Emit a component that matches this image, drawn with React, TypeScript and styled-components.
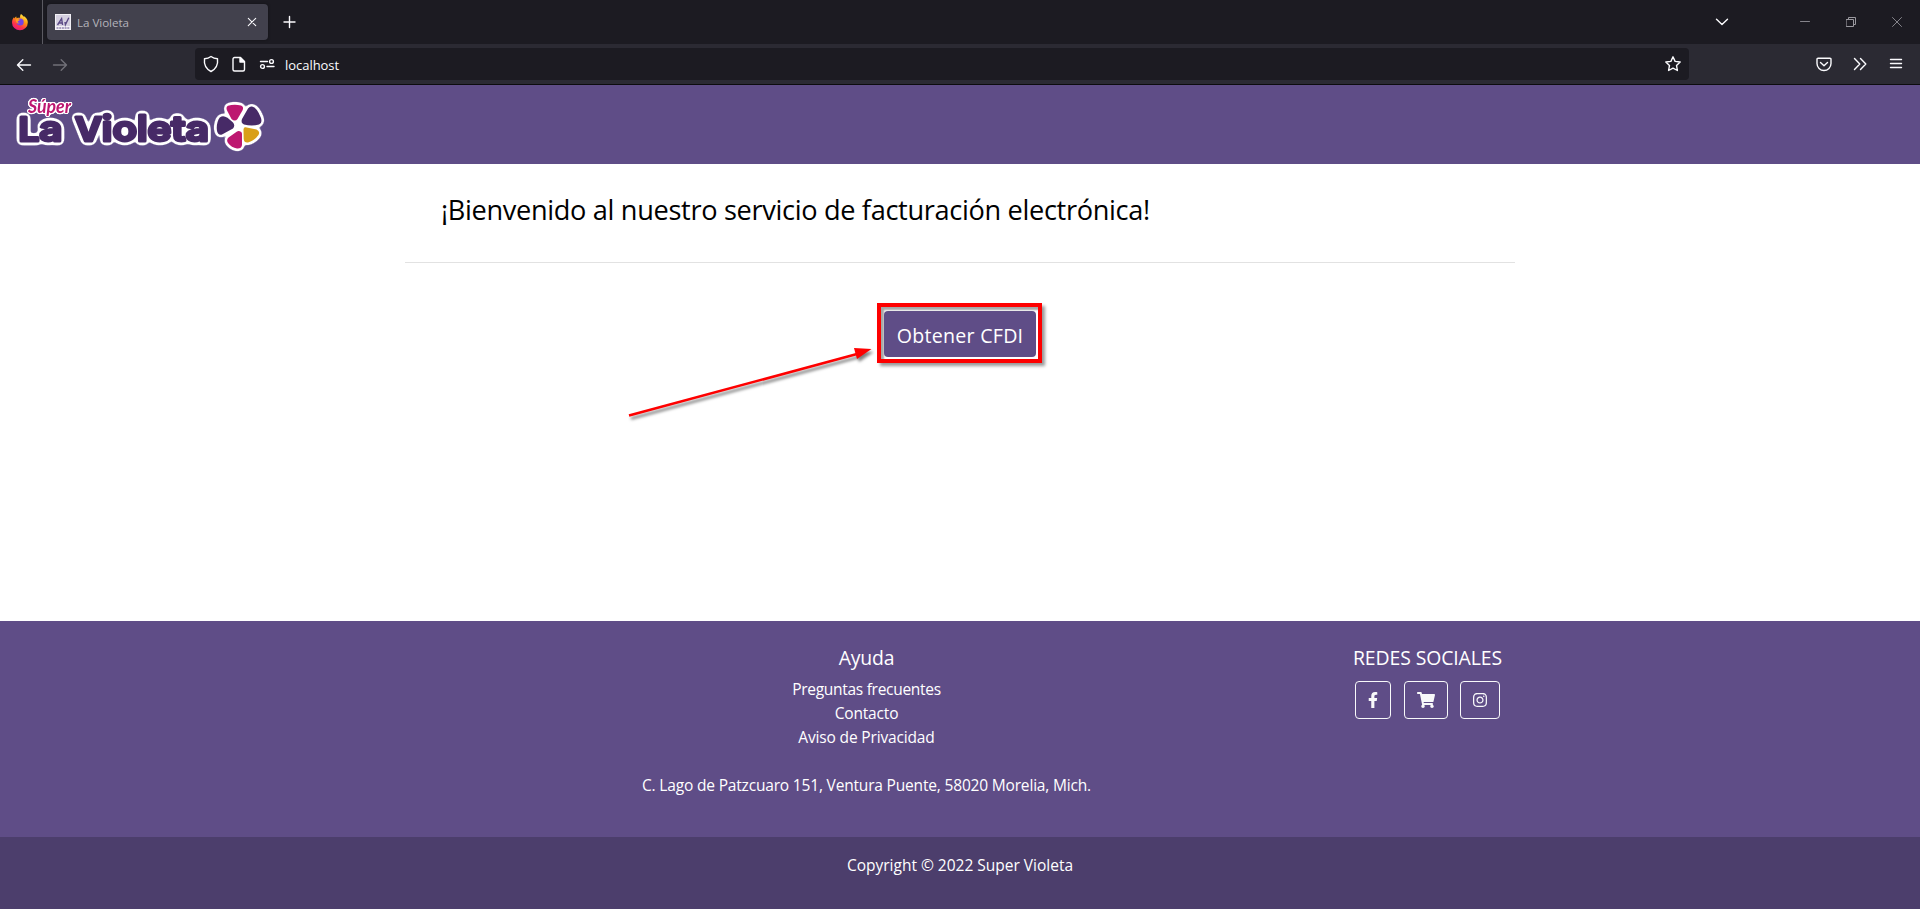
import React from 'react';
import styled, { createGlobalStyle } from 'styled-components';
import { FaFacebookF, FaShoppingCart, FaInstagram } from 'react-icons/fa';

const GlobalStyle = createGlobalStyle`
  * { box-sizing: border-box; }
  body { margin: 0; background: #fff; font-family: "Open Sans", "Noto Sans", sans-serif; }
  h2, h5, p { margin: 0; font-weight: 400; }
  a { color: inherit; text-decoration: none; }
`;

const Page = styled.div`
  width: 1920px;
  height: 910px;
  overflow: hidden;
  display: flex;
  flex-direction: column;
`;

/* Browser chrome */
const TabStrip = styled.div`
  height: 44px;
  flex: none;
  display: flex;
  align-items: center;
  background: #1c1b22;
  color: #fbfbfe;
`;
const FirefoxView = styled.div`
  width: 43px;
  height: 44px;
  padding: 13px 0 0 11px;
  border-right: 1px solid #5b5a62;
`;
const Tab = styled.div`
  width: 221px;
  height: 36px;
  margin-left: 4px;
  padding: 0 11px 0 8px;
  border-radius: 4px;
  background: #42414d;
  display: flex;
  align-items: center;
  box-shadow: 0 0 3px rgba(0, 0, 0, 0.4);
`;
const TabTitle = styled.span`
  flex: 1;
  margin: 0 0 0 6px;
  font-size: 11.64px;
  letter-spacing: -0.05px;
  color: #b4b3bb;
`;
const NewTab = styled.div`
  display: flex;
  margin-left: 15px;
`;
const WindowControls = styled.div`
  margin-left: auto;
  padding-right: 18px;
  display: flex;
  align-items: center;
`;
const Toolbar = styled.div`
  height: 41px;
  flex: none;
  display: flex;
  align-items: center;
  background: #2b2a33;
  border-bottom: 1px solid #0c0c0d;
  color: #fbfbfe;
`;
const NavButtons = styled.div`
  width: 195px;
  padding: 1px 0 0 16px;
  display: flex;
  gap: 20px;
`;
const AddressBar = styled.div`
  width: 1494px;
  height: 32px;
  padding: 0 7px 0 7px;
  border-radius: 4px;
  background: #1c1b22;
  display: flex;
  align-items: center;
`;
const SiteIcons = styled.div`
  display: flex;
  gap: 10px;
`;
const Address = styled.span`
  flex: 1;
  margin: 2px 0 0 9px;
  font-size: 13px;
  letter-spacing: -0.04px;
`;
const ToolbarActions = styled.div`
  margin-left: auto;
  padding-right: 15px;
  display: flex;
  gap: 18px;
`;
const Glyph = styled.svg<{ $gap?: number; $tone?: string; $weight?: number }>`
  display: block;
  flex: none;
  margin-right: ${(p) => p.$gap ?? 0}px;
  color: ${(p) => p.$tone ?? '#fbfbfe'};
  fill: none;
  stroke: currentColor;
  stroke-width: ${(p) => p.$weight ?? 1.4};
  stroke-linecap: round;
  stroke-linejoin: round;
`;

/* Site */
const Header = styled.header`
  height: 79px;
  flex: none;
  padding: 8px 0 0 10px;
  background: #5f4d87;
`;
const Main = styled.main`
  width: 1110px;
  height: 457px;
  flex: none;
  margin: 0 auto;
  display: flex;
  flex-direction: column;
  align-items: center;
`;
const Heading = styled.div`
  width: 1110px;
  height: 99px;
  padding: 26px 36px 0;
  border-bottom: 1px solid #e2e2e2;
`;
const Title = styled.h2`
  font-size: 27.16px;
  line-height: 40px;
  letter-spacing: -0.329px;
  color: #000;
  white-space: nowrap;
`;
const Highlight = styled.div`
  position: relative;
  margin: 40px 1px 0 0;
  width: 165px;
  height: 60px;
  padding: 4px 2px 2px 3px;
  border: 4px solid #fe0000;
  box-shadow: 3px 3px 3px rgba(0, 0, 0, 0.4), inset 3px 3px 2px rgba(0, 0, 0, 0.35);
`;
const PrimaryButton = styled.button`
  display: block;
  width: 152px;
  height: 46px;
  padding: 2px 0 0;
  border: 0;
  border-radius: 4px;
  background: #5f4d87;
  color: #fff;
  font-family: inherit;
  font-size: 19.6px;
  letter-spacing: 0.27px;
`;
const Arrow = styled.svg`
  position: absolute;
  left: -256px;
  top: 36px;
  overflow: visible;
  filter: drop-shadow(2px 3px 1.5px rgba(0, 0, 0, 0.5));
`;
const Footer = styled.footer`
  height: 216px;
  flex: none;
  padding-top: 25px;
  display: grid;
  grid-template-columns: 585px 563px 559px;
  background: #5f4d87;
  color: #fff;
`;
const FooterColumn = styled.section`
  display: flex;
  flex-direction: column;
  align-items: center;
`;
const FooterTitle = styled.h5<{ $track: number }>`
  font-size: 19.4px;
  line-height: 24px;
  letter-spacing: ${(p) => p.$track}px;
  margin-bottom: 7px;
`;
const FooterLine = styled.p<{ $track: number }>`
  font-size: 15.52px;
  line-height: 24px;
  letter-spacing: ${(p) => p.$track}px;
  white-space: nowrap;
`;
const AddressLine = styled(FooterLine)`
  margin-top: 24px;
`;
const SocialRow = styled.div`
  margin-top: 4px;
  display: flex;
`;
const SocialButton = styled.a<{ $width: number; $gap?: number }>`
  width: ${(p) => p.$width}px;
  height: 38px;
  margin-right: ${(p) => p.$gap ?? 0}px;
  border: 1px solid #f8f9fa;
  border-radius: 4px;
  display: flex;
  align-items: center;
  justify-content: center;
  color: #f8f9fa;
  font-size: 16px;
`;
const Copyright = styled.div`
  height: 72px;
  flex: none;
  padding-top: 16px;
  display: flex;
  justify-content: center;
  background: #4c3e6c;
  color: #fff;
`;

const FirefoxLogo = () => (
  <svg width="18" height="18" viewBox="0 0 18 18">
    <defs>
      <linearGradient id="fx" x1="0.8" y1="0" x2="0.25" y2="1">
        <stop offset="0" stopColor="#fff44f" />
        <stop offset="0.4" stopColor="#ff980e" />
        <stop offset="0.7" stopColor="#ff3647" />
        <stop offset="1" stopColor="#e31587" />
      </linearGradient>
    </defs>
    <path fill="url(#fx)" d="M10 1c1.200.7 2 1.500 2.500 2.500 1-.2 1.700.4 2 .9 1.500 1.300 2.300 3 2.300 5A7.900 7.900 0 0 1 1 9.400C1 7.200 1.800 5.500 3 4.200l.5 1.300C4 4.500 4.500 4 5.300 3.600l.3 1.700C7 4.600 8.600 5 9.200 4.800 8.800 3.300 9.300 1.800 10 1z" />
    <circle cx="9.200" cy="8.900" r="3.500" fill="#7542e5" />
    <path fill="#ff9a1f" d="M4.800 6.300c1.600-.8 3.200-.2 4.200.5-.4.900-1.700 1-2.200 1.700-.4.900.8 1.600 2 1.300-1.300 1.600-4.300.4-4-3.500z" />
  </svg>
);

const Favicon = () => (
  <svg width="16" height="16" viewBox="0 0 16 16">
    <path fill="#f3f1f6" d="M0 0h16v16H0z" />
    <path fill="#d5d0e0" d="M1 1h14v11H1z" />
    <path fill="none" stroke="#5b4a86" strokeWidth="1.400" d="M2.500 11 6.600 4.600 7.600 11M4.300 9h3M10 8 10.400 10.700 13.800 3.800" />
    <path stroke="#62518c" strokeWidth="1.200" strokeDasharray="2 .7" d="M1.500 14h13" />
  </svg>
);

const Petals = () => (
  <g>
    <path d="M228 105.800Q234 103.800 241 105.500Q244 106.500 242.700 110L237.500 119Q235 122 231.500 119L226.800 110Q225.800 107 228 105.800Z" fill="#bd1770" />
    <path d="M252 106.500Q257 107.500 261 118Q262.500 123.500 259 124.500Q252 126.500 244 124.500Q240.500 123 242 119L248 108.500Q250 106 252 106.500Z" fill="#472a67" />
    <path d="M221.500 116.500Q224 115.500 227.500 117.800L233 122.500Q235.500 125.500 233 128.500L222 134.500Q218 135.500 217 131Q216 125 218.500 119.500Q219.500 117 221.500 116.500Z" fill="#472a67" />
    <path d="M245.500 127.300L256.500 129.500Q260.500 131.500 258.500 135Q254.500 140.500 248 142.500Q244 143 243.700 139L243.500 129.500Q243.700 127 245.500 127.300Z" fill="#d99f19" />
    <path d="M239 131Q242 131.500 242 134L242 145Q241.500 148.800 237 148.500Q231.500 147.500 228 143Q226 140 228.500 137.500L237 131.500Q238 130.800 239 131Z" fill="#bd1770" />
  </g>
);

const Logo = () => (
  <svg width="262" height="68" viewBox="10 93 262 68" role="img" aria-label="Súper La Violeta">
    <defs>
      {/* Soft-cornered white rim around whatever it is applied to */}
      <filter id="rim" filterUnits="userSpaceOnUse" x="10" y="90" width="262" height="70" colorInterpolationFilters="sRGB">
        <feGaussianBlur in="SourceAlpha" stdDeviation="2.200" result="soft" />
        <feColorMatrix in="soft" values="0 0 0 0 1  0 0 0 0 1  0 0 0 0 1  0 0 0 12 -0.6" result="edge" />
        <feMerge><feMergeNode in="edge" /><feMergeNode in="SourceGraphic" /></feMerge>
      </filter>
      <filter id="thinRim" filterUnits="userSpaceOnUse" x="10" y="90" width="90" height="40" colorInterpolationFilters="sRGB">
        <feGaussianBlur in="SourceAlpha" stdDeviation="1.300" result="soft" />
        <feColorMatrix in="soft" values="0 0 0 0 1  0 0 0 0 1  0 0 0 0 1  0 0 0 12 -0.6" result="edge" />
        <feMerge><feMergeNode in="edge" /><feMergeNode in="SourceGraphic" /></feMerge>
      </filter>
    </defs>
    <g filter="url(#rim)">
      <path d="M231 118l12-3 3 14-5 6-10-4z" fill="#fff" />
      <Petals />
      <g fontFamily="Inter, sans-serif" fontWeight="600" fill="#472a67" stroke="#472a67" strokeWidth="3" strokeLinejoin="round">
        <text x="18.500" y="140.500" fontSize="32" textLength="44" lengthAdjust="spacingAndGlyphs">L<tspan fontSize="35">a</tspan></text>
        <text x="75" y="140.500" fontSize="32" textLength="134" lengthAdjust="spacingAndGlyphs">V<tspan fontSize="35">ioleta</tspan></text>
      </g>
    </g>
    <text x="28" y="113" textLength="43" lengthAdjust="spacingAndGlyphs" fontFamily="Lato, sans-serif" fontStyle="italic" fontWeight="700" fontSize="18" fill="#bd1770" filter="url(#thinRim)">Súper</text>
  </svg>
);

export default function App() {
  return (
    <Page>
      <GlobalStyle />
      <TabStrip>
        <FirefoxView><FirefoxLogo /></FirefoxView>
        <Tab>
          <Favicon />
          <TabTitle>La Violeta</TabTitle>
          <Glyph width="10" height="10" viewBox="0 0 10 10" $weight={1.1}><path d="M1.300 1.300l7.400 7.400M8.700 1.300 1.300 8.700" /></Glyph>
        </Tab>
        <NewTab><Glyph width="14" height="14" viewBox="0 0 14 14"><path d="M6.500 1.500v11M1 7h11" /></Glyph></NewTab>
        <WindowControls>
          <Glyph width="14" height="10" viewBox="0 0 14 10" $gap={71}><path d="M1.500 2.300 7 7.600l5.500-5.300" /></Glyph>
          <Glyph width="10" height="10" viewBox="0 0 10 10" $gap={36} $tone="#85848b" $weight={1}><path d="M.5 4.500h9" /></Glyph>
          <Glyph width="10" height="10" viewBox="0 0 10 10" $gap={36} $tone="#9a999f" $weight={1}><path strokeLinejoin="miter" d="M.5 2.500h7v7h-7zM2.500 2.500v-2h7v7h-2" /></Glyph>
          <Glyph width="10" height="10" viewBox="0 0 10 10" $tone="#85848b" $weight={1}><path d="M.5.5l9 9M9.500.5l-9 9" /></Glyph>
        </WindowControls>
      </TabStrip>
      <Toolbar>
        <NavButtons>
          <Glyph width="16" height="16" viewBox="0 0 16 16"><path d="M14.500 8H1.800M6.800 2.800 1.500 8l5.300 5.200" /></Glyph>
          <Glyph width="16" height="16" viewBox="0 0 16 16" $tone="#717078"><path d="M1.500 8h12.700M9.200 2.800 14.500 8l-5.300 5.200" /></Glyph>
        </NavButtons>
        <AddressBar>
          <SiteIcons>
            <Glyph width="18" height="18" viewBox="0 0 18 18"><path d="M9 1.500c2 1.500 4 2.100 6.500 2.200C16.200 9.500 14 14 9 16.500 4 14 1.800 9.500 2.500 3.700 5 3.600 7 3 9 1.500z" /></Glyph>
            <Glyph width="18" height="18" viewBox="0 0 18 18"><path d="M4.500 2.500h6l4 4v8a1.500 1.500 0 0 1-1.500 1.500H4.500A1.500 1.500 0 0 1 3 14.500V4a1.500 1.500 0 0 1 1.500-1.500z" /><path d="M10 2.800v4.200h4.200z" fill="currentColor" /></Glyph>
            <Glyph width="18" height="18" viewBox="0 0 18 18"><path d="M2.500 6.500h7M9 11.500h7" /><circle cx="13.500" cy="6.500" r="1.900" /><circle cx="4.500" cy="11.500" r="1.900" /></Glyph>
          </SiteIcons>
          <Address>localhost</Address>
          <Glyph width="18" height="18" viewBox="0 0 18 18"><path d="M9 1.800l2.100 4.600 5.100.6-3.700 3.400.9 5.100L9 13.200l-4.400 2.300.9-5.100L1.800 7l5.100-.6z" /></Glyph>
        </AddressBar>
        <ToolbarActions>
          <Glyph width="18" height="18" viewBox="0 0 18 18"><path d="M3 3.200h12a1 1 0 0 1 1 1V8.500a7 7 0 0 1-14 0V4.200a1 1 0 0 1 1-1z" /><path d="M5.500 7.500 9 10.800l3.500-3.300" /></Glyph>
          <Glyph width="18" height="18" viewBox="0 0 18 18"><path d="M3.500 3.500 8.800 9l-5.300 5.500M9.500 3.500 14.800 9l-5.300 5.500" /></Glyph>
          <Glyph width="18" height="18" viewBox="0 0 18 18"><path d="M3.500 4.500h11M3.500 8.500h11M3.500 12.500h11" /></Glyph>
        </ToolbarActions>
      </Toolbar>
      <Header><Logo /></Header>
      <Main>
        <Heading><Title>¡Bienvenido al nuestro servicio de facturación electrónica!</Title></Heading>
        <Highlight>
          <PrimaryButton>Obtener CFDI</PrimaryButton>
          <Arrow width="250" height="80" viewBox="0 0 250 80">
            <path d="M4 72.500 232 11" stroke="#fe0000" strokeWidth="2.600" />
            <path d="M246.500 6 229 5l3 11z" fill="#fe0000" />
          </Arrow>
        </Highlight>
      </Main>
      <Footer>
        <span />
        <FooterColumn>
          <FooterTitle $track={-0.18}>Ayuda</FooterTitle>
          <FooterLine as="a" href="#" $track={-0.295}>Preguntas frecuentes</FooterLine>
          <FooterLine as="a" href="#" $track={-0.177}>Contacto</FooterLine>
          <FooterLine as="a" href="#" $track={-0.161}>Aviso de Privacidad</FooterLine>
          <AddressLine $track={-0.184}>C. Lago de Patzcuaro 151, Ventura Puente, 58020 Morelia, Mich.</AddressLine>
        </FooterColumn>
        <FooterColumn>
          <FooterTitle $track={-0.097}>REDES SOCIALES</FooterTitle>
          <SocialRow>
            <SocialButton href="#" $width={36} $gap={13}><FaFacebookF /></SocialButton>
            <SocialButton href="#" $width={44} $gap={12}><FaShoppingCart size={18} /></SocialButton>
            <SocialButton href="#" $width={40}><FaInstagram /></SocialButton>
          </SocialRow>
        </FooterColumn>
      </Footer>
      <Copyright><FooterLine $track={-0.012}>Copyright © 2022 Super Violeta</FooterLine></Copyright>
    </Page>
  );
}
